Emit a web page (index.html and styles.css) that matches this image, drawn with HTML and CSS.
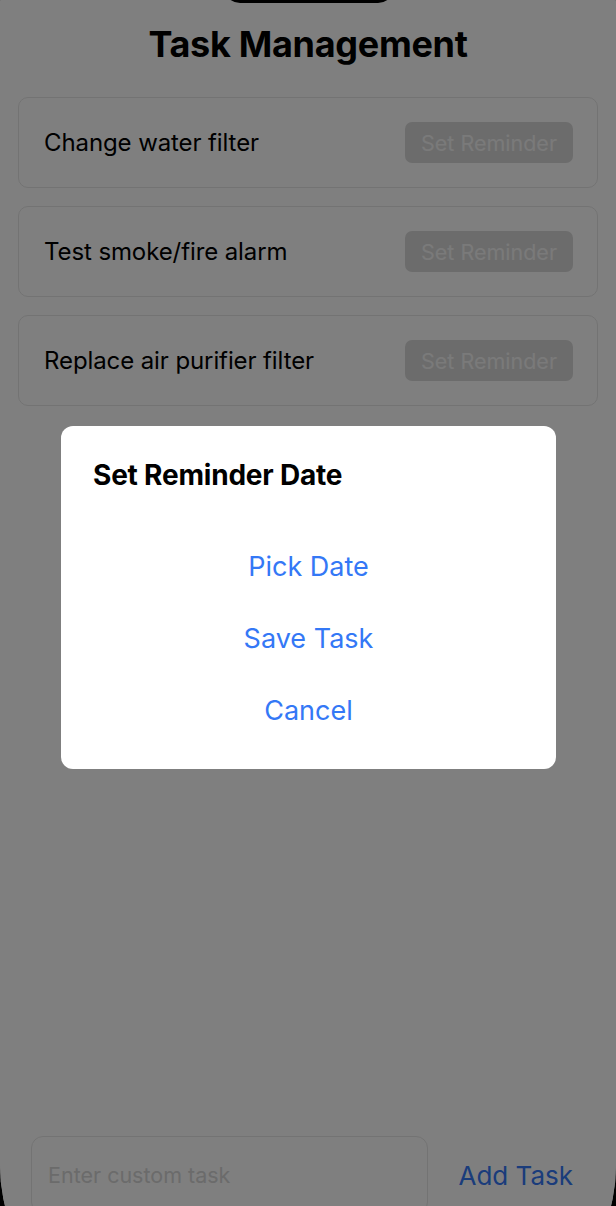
FILE: index.html
```html
<!DOCTYPE html>
<html lang="en">
<head>
<meta charset="utf-8">
<title>Task Management</title>
<link rel="stylesheet" href="styles.css">
</head>
<body>
<div class="screen">
  <div class="island"></div>
  <h1 class="title">Task Management</h1>
  <div class="task-list">
    <div class="task-card">
      <span class="task-name">Change water filter</span>
      <button class="reminder-btn">Set Reminder</button>
    </div>
    <div class="task-card">
      <span class="task-name">Test smoke/fire alarm</span>
      <button class="reminder-btn">Set Reminder</button>
    </div>
    <div class="task-card">
      <span class="task-name">Replace air purifier filter</span>
      <button class="reminder-btn">Set Reminder</button>
    </div>
  </div>
  <div class="spacer"></div>
  <div class="add-bar">
    <div class="task-input"><span class="placeholder">Enter custom task</span></div>
    <button class="add-btn">Add Task</button>
  </div>
  <div class="dim"></div>
  <div class="modal-layer">
    <div class="dialog">
      <div class="dialog-title">Set Reminder Date</div>
      <div class="dialog-actions">
        <button class="dialog-btn">Pick Date</button>
        <button class="dialog-btn">Save Task</button>
        <button class="dialog-btn">Cancel</button>
      </div>
    </div>
  </div>
</div>
</body>
</html>
```
FILE: styles.css
```css
* { box-sizing: border-box; }
html, body {
  margin: 0;
  padding: 0;
  background: #000;
  height: 1206px;
  overflow: hidden;
}
body {
  font-family: Inter, "Noto Sans", "Liberation Sans", sans-serif;
}
button {
  font-family: inherit;
  border: none;
  background: none;
  padding: 0;
  cursor: pointer;
}
.screen {
  position: relative;
  width: 616px;
  height: 1335px;
  background: #fff;
  border-radius: 1px 1px 170px 170px;
  display: flex;
  flex-direction: column;
  padding-bottom: 121px;
  overflow: hidden;
}
.island {
  position: absolute;
  top: -30px;
  left: 224px;
  width: 170px;
  height: 33px;
  background: #000;
  border-radius: 16px;
  z-index: 5;
}
.title {
  margin: 0;
  padding-top: 22px;
  text-align: center;
  font-size: 36px;
  line-height: 44px;
  font-weight: 700;
  letter-spacing: -0.3px;
  color: #000;
}
.task-list {
  margin-top: 31px;
  padding: 0 18px;
  display: flex;
  flex-direction: column;
  gap: 18px;
}
.task-card {
  height: 91px;
  border: 1px solid #e6e6e6;
  border-radius: 10px;
  display: flex;
  align-items: center;
  justify-content: space-between;
  padding: 0 24px 0 25px;
}
.task-name {
  font-size: 24px;
  color: #000;
  letter-spacing: -0.1px;
}
.reminder-btn {
  width: 168px;
  height: 41px;
  border-radius: 7px;
  background: #d9d9d9;
  color: #f5f5f5;
  font-size: 21.5px;
}
.spacer { flex: 1; }
.add-bar {
  display: flex;
  align-items: center;
  gap: 30px;
  padding: 0 43px 0 31px;
}
.task-input {
  flex: 1;
  height: 78px;
  border: 1px solid #e6e6e6;
  border-radius: 12px;
  display: flex;
  align-items: center;
  padding-left: 16px;
}
.placeholder {
  font-size: 21.5px;
  color: #d6d6d6;
}
.add-btn {
  font-size: 26px;
  color: #3478f6;
}
.dim {
  position: absolute;
  inset: 0;
  background: rgba(0, 0, 0, 0.5);
  z-index: 10;
}
.modal-layer {
  position: absolute;
  inset: 0;
  z-index: 20;
  display: flex;
  justify-content: center;
  align-items: flex-start;
  padding-top: 426px;
}
.dialog {
  width: 495px;
  margin-left: 1px;
  background: #fff;
  border-radius: 12px;
  padding: 32px 32px 22px 32px;
}
.dialog-title {
  font-size: 28px;
  line-height: 34px;
  font-weight: 700;
  letter-spacing: -0.2px;
  color: #000;
}
.dialog-actions {
  margin-top: 39px;
  display: flex;
  flex-direction: column;
}
.dialog-btn {
  font-size: 27px;
  line-height: 72px;
  color: #3478f6;
  text-align: center;
}
```
